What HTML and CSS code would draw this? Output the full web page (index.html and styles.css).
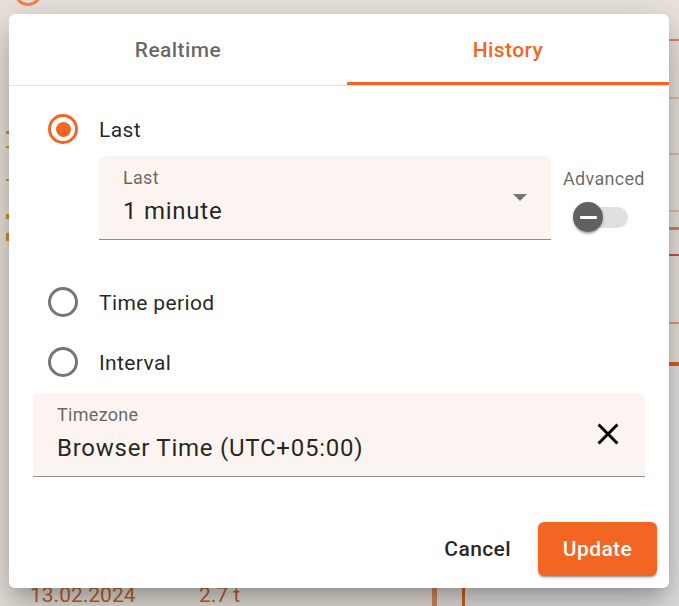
FILE: index.html
```html
<!DOCTYPE html>
<html>
<head>
<meta charset="utf-8">
<link rel="stylesheet" href="styles.css">
</head>
<body>
<div class="page">
  <div class="bg">
    <span class="frag ring-frag"></span>
    <span class="frag card-light"></span>
    <span class="frag l1"></span>
    <span class="frag l2"></span>
    <span class="frag l3"></span>
    <span class="frag l4"></span>
    <span class="frag l5"></span>
    <span class="frag l6"></span>
    <span class="frag l7"></span>
    <span class="frag l8"></span>
    <span class="frag lb1"></span>
    <span class="frag lb2"></span>
    <span class="frag lb3"></span>
    <span class="frag lb4"></span>
    <span class="frag lb5"></span>
    <span class="frag v1"></span>
    <span class="frag v2"></span>
    <span class="frag bottom-text">13.02.2024</span>
    <span class="frag bottom-text2">2.7 t</span>
  </div>

  <div class="dialog">
    <div class="tabs">
      <div class="tab">Realtime</div>
      <div class="tab active">History</div>
    </div>

    <div class="body">
      <div class="radio checked">
        <span class="radio-box"><span class="radio-ring"></span></span>
        <span class="radio-label">Last</span>
      </div>

      <div class="last-row">
        <div class="field select-field">
          <span class="field-label">Last</span>
          <span class="field-value">1 minute</span>
          <span class="select-arrow"></span>
        </div>
        <div class="advanced">
          <span class="advanced-label">Advanced</span>
          <span class="toggle">
            <span class="toggle-track"></span>
            <span class="toggle-thumb"><span class="toggle-minus"></span></span>
          </span>
        </div>
      </div>

      <div class="radio period">
        <span class="radio-box"><span class="radio-ring"></span></span>
        <span class="radio-label">Time period</span>
      </div>
      <div class="radio">
        <span class="radio-box"><span class="radio-ring"></span></span>
        <span class="radio-label">Interval</span>
      </div>

      <div class="field tz-field">
        <div class="tz-text">
          <span class="field-label">Timezone</span>
          <span class="field-value">Browser Time (UTC+05:00)</span>
        </div>
        <span class="clear-btn">
          <svg viewBox="0 0 24 24" width="36" height="36"><path d="M19 6.41L17.59 5 12 10.59 6.41 5 5 6.41 10.59 12 5 17.59 6.41 19 12 13.41 17.59 19 19 17.59 13.41 12z" fill="#000"/></svg>
        </span>
      </div>
    </div>

    <div class="actions">
      <button class="btn btn-text">Cancel</button>
      <button class="btn btn-primary">Update</button>
    </div>
  </div>
</div>
</body>
</html>
```

FILE: styles.css
```css
* { box-sizing: border-box; }

html, body {
  margin: 0;
  padding: 0;
}

body {
  font-family: Roboto, "Noto Sans", sans-serif;
}

.page {
  position: relative;
  width: 679px;
  height: 606px;
  overflow: hidden;
  background: #ebe4de;
}

/* dimmed page behind the dialog */
.bg .frag {
  position: absolute;
  display: block;
}

.ring-frag {
  left: 14px;
  top: -22px;
  width: 28px;
  height: 28px;
  border: 3px solid #f4874f;
  border-radius: 50%;
}

.card-light {
  left: 466px;
  top: 364px;
  width: 220px;
  height: 250px;
  background: #e6e5e4;
}

.l1 { left: 669px; top: 39px; width: 12px; height: 2px; background: #e08a5e; }
.l2 { left: 669px; top: 97px; width: 12px; height: 2px; background: #dcbfa9; }
.l3 { left: 669px; top: 153px; width: 12px; height: 2px; background: #dcbfa9; }
.l4 { left: 669px; top: 210px; width: 12px; height: 2px; background: #dcbfa9; }
.l5 { left: 669px; top: 227px; width: 12px; height: 3px; background: #c98a6c; }
.l6 { left: 669px; top: 254px; width: 12px; height: 2px; background: #c8524a; }
.l7 { left: 669px; top: 322px; width: 12px; height: 2px; background: #e0a27d; }
.l8 { left: 669px; top: 362px; width: 12px; height: 4px; background: #d8642a; }

.lb1 { left: 6px; top: 131px; width: 3px; height: 3px; background: #d98a40; }
.lb2 { left: 6px; top: 146px; width: 3px; height: 2px; background: #d98a40; }
.lb3 { left: 6px; top: 179px; width: 3px; height: 2px; background: #d98a40; }
.lb4 { left: 6px; top: 214px; width: 3px; height: 5px; background: #d98a40; }
.lb5 { left: 6px; top: 233px; width: 3px; height: 8px; background: #d98a40; }

.v1 { left: 432px; top: 585px; width: 5px; height: 30px; background: #d98b66; }
.v2 { left: 462px; top: 585px; width: 3px; height: 30px; background: #d2622a; }

.bottom-text, .bottom-text2 {
  top: 583px;
  font-size: 21px;
  color: #c0652f;
  line-height: 24px;
}
.bottom-text { left: 30px; }
.bottom-text2 { left: 199px; }

/* dialog */
.dialog {
  position: absolute;
  left: 9px;
  top: 14px;
  width: 660px;
  height: 574px;
  background: #fff;
  border-radius: 6px;
  display: flex;
  flex-direction: column;
  box-shadow: 0 11px 15px -7px rgba(0,0,0,.2), 0 24px 38px 3px rgba(0,0,0,.14), 0 9px 46px 8px rgba(0,0,0,.12);
}

.tabs {
  display: flex;
  height: 72px;
  border-bottom: 1px solid #e0e0e0;
}

.tab {
  flex: 1 1 auto;
  display: flex;
  align-items: center;
  justify-content: center;
  font-size: 21px;
  font-weight: 500;
  letter-spacing: 0.4px;
  color: rgba(0,0,0,.6);
  border-bottom: 3px solid transparent;
  padding-top: 3px;
}

.tab.active {
  color: #f26522;
  border-bottom-color: #f26522;
}

.body {
  flex: 1;
  padding: 13px 24px 0;
  display: flex;
  flex-direction: column;
}

.radio {
  display: flex;
  align-items: center;
  height: 60px;
}

.radio-box {
  width: 60px;
  height: 60px;
  display: flex;
  align-items: center;
  justify-content: center;
}

.radio-ring {
  width: 30px;
  height: 30px;
  border: 3px solid #757575;
  border-radius: 50%;
  display: flex;
  align-items: center;
  justify-content: center;
}

.radio.checked .radio-ring {
  border-color: #f26522;
}

.radio.checked .radio-ring::after {
  content: "";
  width: 15px;
  height: 15px;
  border-radius: 50%;
  background: #f26522;
}

.radio-label {
  padding-left: 6px;
  padding-top: 2px;
  font-size: 21px;
  letter-spacing: 0.375px;
  color: rgba(0,0,0,.87);
}

.radio.period {
  margin-top: 32px;
}

.last-row {
  display: flex;
  margin-top: -3px;
  padding-left: 66px;
}

.field {
  position: relative;
  height: 84px;
  background: #fcf4f0;
  border-radius: 6px 6px 0 0;
  border-bottom: 1px solid #8f8f8f;
}

.select-field {
  width: 452px;
  padding: 0 24px;
}

.field-label {
  display: block;
  font-size: 18px;
  line-height: 21px;
  letter-spacing: 0.3px;
  color: rgba(0,0,0,.6);
  padding-top: 11px;
}

.field-value {
  display: block;
  font-size: 24px;
  line-height: 28px;
  letter-spacing: 0.75px;
  color: rgba(0,0,0,.87);
  padding-top: 9px;
}

.select-arrow {
  position: absolute;
  right: 24px;
  top: 38px;
  width: 0;
  height: 0;
  border-left: 7.5px solid transparent;
  border-right: 7.5px solid transparent;
  border-top: 7.5px solid #757575;
}

.advanced {
  margin-left: 12px;
  display: flex;
  flex-direction: column;
  padding-top: 12px;
}

.advanced-label {
  font-size: 18px;
  line-height: 21px;
  letter-spacing: 0.3px;
  color: rgba(0,0,0,.6);
}

.toggle {
  position: relative;
  margin-top: 13px;
  margin-left: 10px;
  width: 56px;
  height: 30px;
  display: block;
}

.toggle-track {
  position: absolute;
  left: 2px;
  top: 5px;
  width: 53px;
  height: 21px;
  border-radius: 11px;
  background: #e0e0e0;
}

.toggle-thumb {
  position: absolute;
  left: 0;
  top: 0;
  width: 30px;
  height: 30px;
  border-radius: 50%;
  background: #616161;
  box-shadow: 0 3px 2px -1px rgba(0,0,0,.2), 0 1px 2px 0 rgba(0,0,0,.14), 0 1px 4px 0 rgba(0,0,0,.12);
  display: flex;
  align-items: center;
  justify-content: center;
}

.toggle-minus {
  width: 17px;
  height: 3px;
  background: #fff;
  border-radius: 1px;
}

.tz-field {
  margin-top: 1px;
  display: flex;
  align-items: center;
  padding: 0 19px 0 24px;
}

.tz-text {
  flex: 1;
  align-self: flex-start;
}

.clear-btn {
  display: flex;
  width: 36px;
  height: 36px;
  margin-top: -2px;
}

.actions {
  height: 78px;
  padding: 0 12px;
  display: flex;
  align-items: center;
  justify-content: flex-end;
  gap: 12px;
}

.btn {
  font-family: Roboto, "Noto Sans", sans-serif;
  font-size: 21px;
  font-weight: 500;
  letter-spacing: 0.4px;
  height: 54px;
  border: none;
  border-radius: 6px;
  padding: 0 24px;
  cursor: pointer;
}

.btn-text {
  background: transparent;
  color: rgba(0,0,0,.87);
  padding: 0 15px;
}

.btn-primary {
  background: #f26522;
  color: #fff;
  width: 119px;
  box-shadow: 0 3px 1px -2px rgba(0,0,0,.2), 0 2px 2px 0 rgba(0,0,0,.14), 0 1px 5px 0 rgba(0,0,0,.12);
}
```
